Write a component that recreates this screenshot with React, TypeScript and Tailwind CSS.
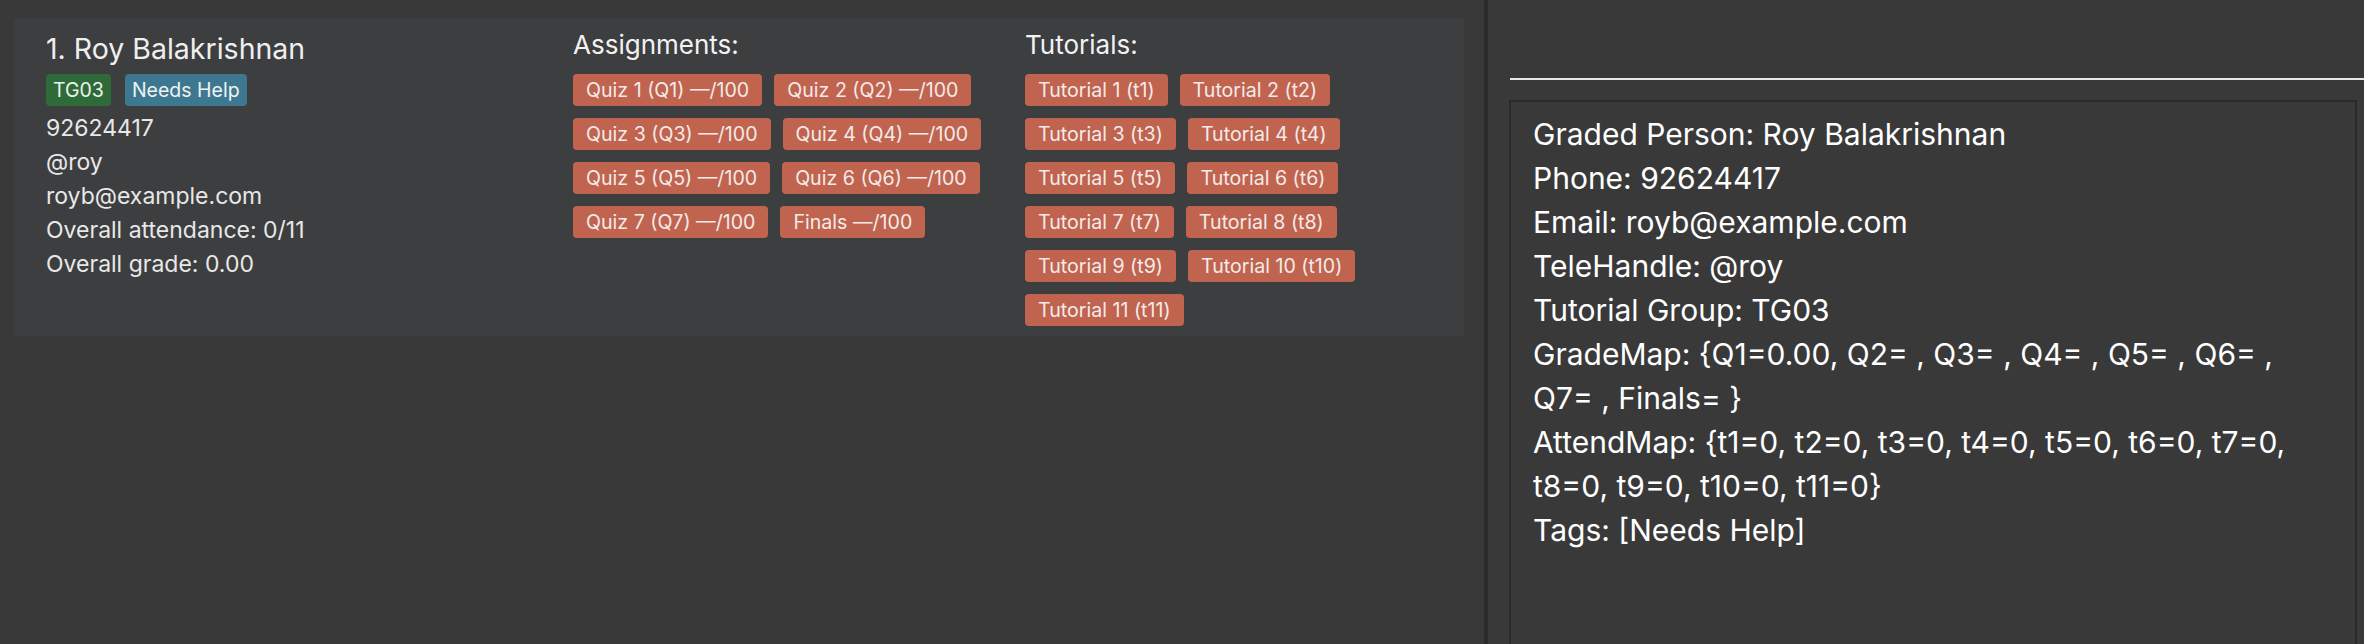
import React from "react";

const assignments = [
  "Quiz 1 (Q1) —/100",
  "Quiz 2 (Q2) —/100",
  "Quiz 3 (Q3) —/100",
  "Quiz 4 (Q4) —/100",
  "Quiz 5 (Q5) —/100",
  "Quiz 6 (Q6) —/100",
  "Quiz 7 (Q7) —/100",
  "Finals —/100",
];

const tutorials = Array.from({ length: 11 }, (_, i) => `Tutorial ${i + 1} (t${i + 1})`);

const details = [
  "Graded Person: Roy Balakrishnan",
  "Phone: 92624417",
  "Email: royb@example.com",
  "TeleHandle: @roy",
  "Tutorial Group: TG03",
  "GradeMap: {Q1=0.00, Q2= , Q3= , Q4= , Q5= , Q6= ,",
  "Q7= , Finals= }",
  "AttendMap: {t1=0, t2=0, t3=0, t4=0, t5=0, t6=0, t7=0,",
  "t8=0, t9=0, t10=0, t11=0}",
  "Tags: [Needs Help]",
];

function Chip({ label }: { label: string }) {
  return (
    <span className="h-[32px] rounded-[4px] bg-[#c06450] px-[13px] text-[19.6px] leading-[32px] text-[#f3ebe8] whitespace-nowrap">
      {label}
    </span>
  );
}

function ChipColumn({ title, items, width }: { title: string; items: string[]; width: string }) {
  return (
    <div className={`${width} pt-[10px]`}>
      <div className="text-[26px] leading-[34px] text-[#f2f2f2]">{title}</div>
      <div className="mt-[12px] flex flex-wrap gap-x-[12px] gap-y-[12px]">
        {items.map((it) => (
          <Chip key={it} label={it} />
        ))}
      </div>
    </div>
  );
}

export default function App() {
  return (
    <div
      className="flex h-[644px] w-[2364px] overflow-hidden bg-[#393939]"
      style={{ fontFamily: "Inter, 'Noto Sans', sans-serif" }}
    >
      {/* person list */}
      <div className="w-[1484px] pl-[14px] pr-[20px] pt-[18px]">
        <div className="flex h-[318px] bg-[#3d3e40]">
          <div className="w-[559px] pl-[32px] pt-[13px]">
            <div className="text-[28.5px] leading-[36px] text-[#efefef]">1. Roy Balakrishnan</div>
            <div className="mt-[7px] flex gap-[14px]">
              <span className="h-[32px] rounded-[4px] bg-[#2e6b38] px-[7px] text-[19.5px] leading-[32px] text-[#eef2ee]">
                TG03
              </span>
              <span className="h-[32px] rounded-[4px] bg-[#3e7890] px-[7px] text-[19.5px] leading-[32px] text-[#eef2f4]">
                Needs Help
              </span>
            </div>
            <div className="mt-[5px] text-[23px] leading-[34px] text-[#e8e8e8]">
              <div>92624417</div>
              <div>@roy</div>
              <div>royb@example.com</div>
              <div>Overall attendance: 0/11</div>
              <div>Overall grade: 0.00</div>
            </div>
          </div>
          <ChipColumn title="Assignments:" items={assignments} width="w-[452px]" />
          <ChipColumn title="Tutorials:" items={tutorials} width="w-[420px]" />
        </div>
      </div>

      <div className="w-[4px] bg-[#2b2b2b]" />

      {/* result panel */}
      <div className="flex flex-1 flex-col pl-[21px] pt-[78px]">
        <div className="ml-[1px] h-[2px] bg-[#e8e8e8]" />
        <div className="mr-[7px] mt-[20px] flex-1 border-2 border-b-0 border-[#2a2a2a] pl-[22px] pt-[10px]">
          {details.map((d) => (
            <div key={d} className="whitespace-nowrap text-[30px] leading-[44px] text-white">
              {d}
            </div>
          ))}
        </div>
      </div>
    </div>
  );
}
